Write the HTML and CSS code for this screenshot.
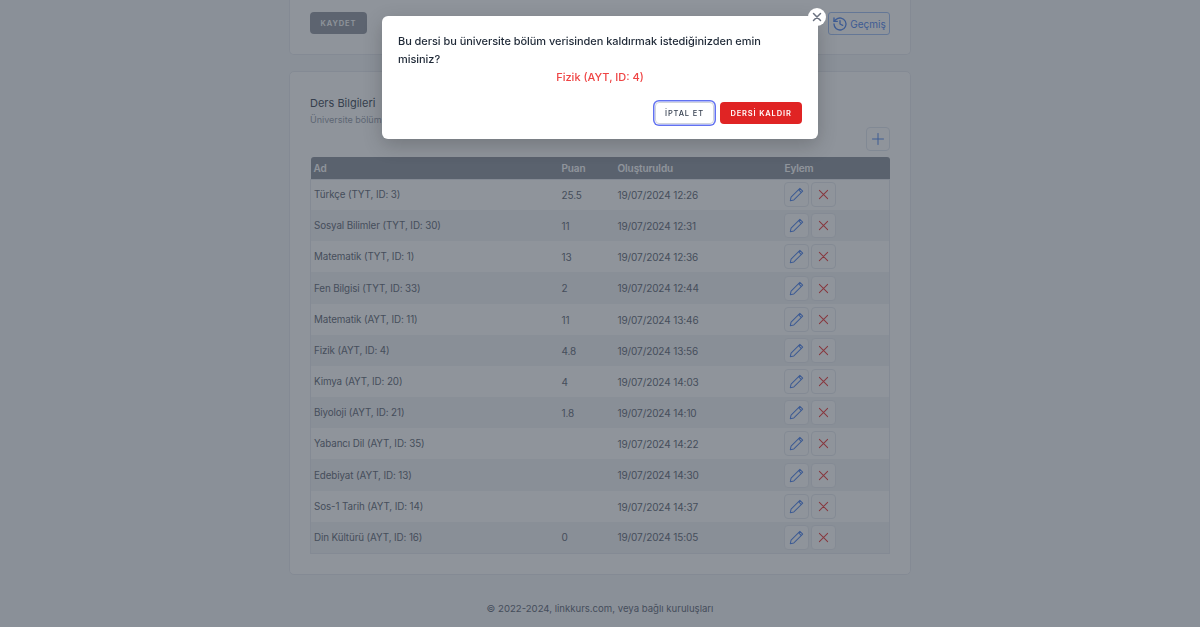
FILE: index.html
```html
<!DOCTYPE html>
<html lang="tr">
<head>
  <meta charset="UTF-8">
  <meta name="viewport" content="width=device-width, initial-scale=1.0">
  <title>Ders Bilgileri</title>
  <link rel="stylesheet" href="styles.css">
</head>
<body>
  <main class="page">
    <section class="card card-top">
      <button class="btn-save">KAYDET</button>
      <button class="btn-history">
        <svg width="16" height="16" viewBox="0 0 24 24" fill="none" stroke="currentColor" stroke-width="2" stroke-linecap="round" stroke-linejoin="round"><path d="M3 12a9 9 0 1 0 3-6.7L3 8"/><path d="M3 3v5h5"/><path d="M12 7v5l4 2"/></svg>
        Geçmiş
      </button>
    </section>

    <section class="card card-main">
      <h3 class="card-title">Ders Bilgileri</h3>
      <p class="card-sub">Üniversite bölüm verisine ait dersler</p>
      <div class="toolbar">
        <button class="btn-add">
          <svg width="12" height="12" viewBox="0 0 12 12" fill="none" stroke="currentColor" stroke-width="1" stroke-linecap="round"><path d="M6 .5v11M.5 6h11"/></svg>
        </button>
      </div>
      <table class="lessons">
        <thead>
          <tr><th class="col-name">Ad</th><th class="col-score">Puan</th><th class="col-date">Oluşturuldu</th><th>Eylem</th></tr>
        </thead>
        <tbody id="rows"></tbody>
      </table>
    </section>

    <footer class="footer">© 2022-2024, linkkurs.com, veya bağlı kuruluşları</footer>
  </main>

  <div class="overlay"></div>
  <div class="modal">
    <button class="modal-close">
      <svg width="10" height="10" viewBox="0 0 10 10" fill="none" stroke="currentColor" stroke-width="1.5" stroke-linecap="round"><path d="M1.5 1.5l7 7M8.5 1.5l-7 7"/></svg>
    </button>
    <p class="modal-text">Bu dersi bu üniversite bölüm verisinden kaldırmak istediğinizden emin misiniz?</p>
    <p class="modal-target">Fizik (AYT, ID: 4)</p>
    <div class="modal-actions">
      <button class="btn-cancel">İPTAL ET</button>
      <button class="btn-remove">DERSİ KALDIR</button>
    </div>
  </div>

  <script>
    const lessons = [
      ["Türkçe (TYT, ID: 3)", "25.5", "19/07/2024 12:26"],
      ["Sosyal Bilimler (TYT, ID: 30)", "11", "19/07/2024 12:31"],
      ["Matematik (TYT, ID: 1)", "13", "19/07/2024 12:36"],
      ["Fen Bilgisi (TYT, ID: 33)", "2", "19/07/2024 12:44"],
      ["Matematik (AYT, ID: 11)", "11", "19/07/2024 13:46"],
      ["Fizik (AYT, ID: 4)", "4.8", "19/07/2024 13:56"],
      ["Kimya (AYT, ID: 20)", "4", "19/07/2024 14:03"],
      ["Biyoloji (AYT, ID: 21)", "1.8", "19/07/2024 14:10"],
      ["Yabancı Dil (AYT, ID: 35)", "", "19/07/2024 14:22"],
      ["Edebiyat (AYT, ID: 13)", "", "19/07/2024 14:30"],
      ["Sos-1 Tarih (AYT, ID: 14)", "", "19/07/2024 14:37"],
      ["Din Kültürü (AYT, ID: 16)", "0", "19/07/2024 15:05"]
    ];

    const pencil = '<svg width="15" height="15" viewBox="0 0 16 16" fill="none" stroke="currentColor" stroke-width="1.1" stroke-linejoin="round"><path d="M11.6 1.4l3 3-9.4 9.4-3.8.8.8-3.8z"/><path d="M10.2 2.9l3 3"/></svg>';
    const cross = '<svg width="11" height="11" viewBox="0 0 12 12" fill="none" stroke="currentColor" stroke-width="1.1" stroke-linecap="round"><path d="M1.5 1.5l9 9M10.5 1.5l-9 9"/></svg>';

    document.getElementById("rows").innerHTML = lessons.map((l) => `
      <tr>
        <td>${l[0]}</td>
        <td>${l[1]}</td>
        <td>${l[2]}</td>
        <td class="cell-actions"><div class="actions"><button class="btn-icon edit">${pencil}</button><button class="btn-icon del">${cross}</button></div></td>
      </tr>`).join("");
  </script>
</body>
</html>
```

FILE: styles.css
```css
* {
  box-sizing: border-box;
}

body {
  margin: 0;
  height: 627px;
  overflow: hidden;
  background-color: #f5f6f9;
  font-family: 'Inter', 'Noto Sans', sans-serif;
  color: #4b5563;
}

button {
  font-family: inherit;
  padding: 0;
  cursor: pointer;
}

.page {
  width: 622px;
  margin: 0 auto;
}

.card {
  background-color: #fff;
  border: 1px solid #e9ebf0;
  border-radius: 5px;
}

.card-top {
  height: 55px;
  padding: 12px 20px 0;
  border-top: none;
  border-radius: 0 0 5px 5px;
  display: flex;
  justify-content: space-between;
  align-items: flex-start;
  margin-bottom: 16px;
}

.btn-save {
  width: 57px;
  height: 22px;
  border: none;
  border-radius: 4px;
  background-color: #9b9fa9;
  color: #fff;
  font-size: 7.5px;
  font-weight: 600;
  letter-spacing: 0.9px;
}

.btn-history {
  width: 62px;
  height: 23px;
  border: 1px solid #a8c5f5;
  border-radius: 3px;
  background-color: #fff;
  color: #5b8def;
  font-size: 10px;
  display: flex;
  align-items: center;
  justify-content: center;
  gap: 2px;
}

.card-main {
  height: 504px;
  padding: 24px 20px 0;
}

.card-title {
  margin: 0;
  font-size: 11px;
  line-height: 14px;
  font-weight: 400;
  color: #4b5563;
}

.card-sub {
  margin: 4px 0 0;
  font-size: 9px;
  line-height: 12px;
  color: #9ca3af;
}

.toolbar {
  display: flex;
  justify-content: flex-end;
  margin-top: 1px;
  height: 30px;
}

.btn-add {
  width: 24px;
  height: 24px;
  border: 1px solid #e3e8f0;
  border-radius: 4px;
  background-color: #fff;
  color: #5b8def;
  display: flex;
  align-items: center;
  justify-content: center;
}

.lessons {
  width: 580px;
  border-collapse: collapse;
  table-layout: fixed;
  font-size: 10px;
  letter-spacing: -0.1px;
}

.lessons th {
  height: 22px;
  padding: 0 3px;
  background-color: #959aa4;
  color: #fff;
  font-weight: 600;
  text-align: left;
}

.lessons th:first-child {
  border-top-left-radius: 3px;
}

.lessons th:last-child {
  border-top-right-radius: 3px;
}

.col-name {
  width: 248px;
}

.col-score {
  width: 56px;
}

.col-date {
  width: 167px;
}

.lessons td {
  height: 31px;
  padding: 0 3px;
  color: #6b7280;
}

.lessons td:first-child {
  font-size: 9.8px;
}

.lessons td.cell-actions {
  padding-left: 2px;
}

.lessons tbody tr:nth-child(4) td,
.lessons tbody tr:nth-child(10) td {
  height: 32px;
}

.lessons tbody tr {
  background-color: #fff;
}

.lessons tbody tr:nth-child(even) {
  background-color: #f3f4f6;
}

.lessons tbody {
  border: 1px solid #e9ebf0;
}

.actions {
  display: flex;
  gap: 2px;
}

.btn-icon {
  width: 25px;
  height: 25px;
  border: 1px solid #e8ebf0;
  border-radius: 4px;
  background-color: #fff;
  display: flex;
  align-items: center;
  justify-content: center;
}

.edit {
  color: #5b8def;
}

.del {
  color: #ef4444;
}

.footer {
  margin-top: 27px;
  text-align: center;
  font-size: 9.6px;
  line-height: 14px;
  color: #6b7280;
}

.overlay {
  position: fixed;
  inset: 0;
  background-color: rgba(31, 41, 55, 0.5);
}

.modal {
  position: fixed;
  top: 16px;
  left: 382px;
  width: 436px;
  height: 123px;
  padding: 16px;
  background-color: #fff;
  border-radius: 6px;
  box-shadow: 0 6px 20px rgba(0, 0, 0, 0.2);
}

.modal-close {
  position: absolute;
  top: -8px;
  right: -8px;
  width: 18px;
  height: 18px;
  border: none;
  border-radius: 50%;
  background-color: #fff;
  color: #6b7280;
  display: flex;
  align-items: center;
  justify-content: center;
}

.modal-text {
  margin: 0;
  padding-right: 20px;
  font-size: 11px;
  font-weight: 500;
  letter-spacing: -0.05px;
  line-height: 18px;
  color: #1f2937;
}

.modal-target {
  margin: 0;
  text-align: center;
  font-size: 11px;
  font-weight: 500;
  line-height: 18px;
  color: #ef4444;
}

.modal-actions {
  display: flex;
  justify-content: flex-end;
  align-items: center;
  gap: 8px;
  margin-top: 16px;
}

.btn-cancel {
  width: 59px;
  height: 22px;
  margin-right: -2px;
  border: 1px solid #d1d5db;
  border-radius: 4px;
  background-color: #fff;
  box-shadow: 0 0 0 0.5px #fff, 0 0 0 2px #6272f1;
  color: #374151;
  font-size: 7.5px;
  font-weight: 500;
  letter-spacing: 0.85px;
}

.btn-remove {
  width: 82px;
  height: 22px;
  border: none;
  border-radius: 4px;
  background-color: #e02424;
  color: #fff;
  font-size: 7.5px;
  font-weight: 600;
  letter-spacing: 0.85px;
}
```
